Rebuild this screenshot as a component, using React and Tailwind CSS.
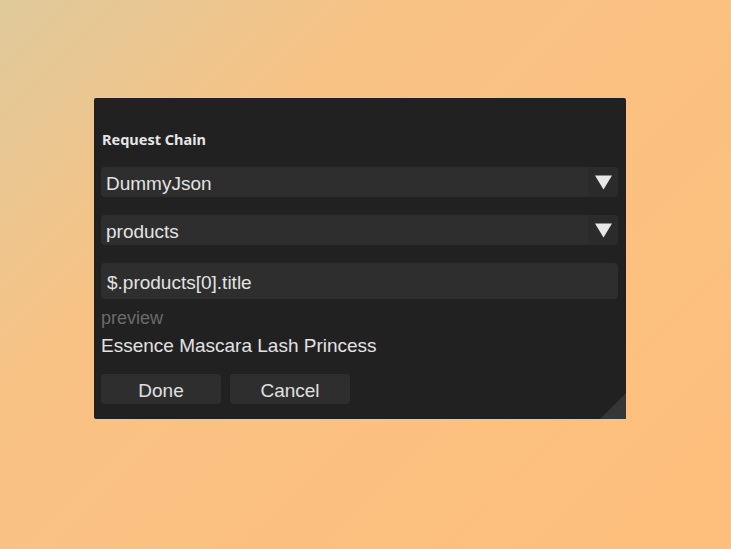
export default function App() {
  return (
    <main className="w-[731px] h-[549px] bg-[linear-gradient(135deg,#dfca9b_0%,#f8c284_32%,#ffbf7c_100%)] pt-[98px] pl-[94px]">
      <div className="relative w-[532px] h-[321px] bg-[#212121] rounded-[2px] px-[7px] pt-[31px] font-['Liberation_Sans',Arial,sans-serif] text-[#e3e3e3]">
        {/* TITLE */}
        <h1 className="h-[20px] pl-[1px] text-[14.5px] leading-[20px] font-bold font-['Noto_Sans',sans-serif] text-[#e6e6e6]">
          Request Chain
        </h1>

        {/* DROPDOWNS */}
        <div className="mt-[18px] flex flex-col gap-[18px]">
          {["DummyJson", "products"].map((label) => (
            <div
              key={label}
              className="flex h-[30px] w-[517px] rounded-[4px] bg-[#2e2e2e] overflow-hidden"
            >
              <div className="flex-1 pl-[5px] text-[19px] leading-[33px]">{label}</div>
              <div className="w-[30px] h-full bg-[#2b2b2b] flex items-center justify-center">
                <svg width="17" height="15" viewBox="0 0 17 15">
                  <polygon points="0,0.5 17,0.5 8.5,14.5" fill="#e8e8e8" />
                </svg>
              </div>
            </div>
          ))}
        </div>

        {/* PATH INPUT */}
        <div className="mt-[18px] h-[36px] w-[517px] rounded-[4px] bg-[#2e2e2e] pl-[6px] text-[19px] leading-[40px]">
          $.products[0].title
        </div>

        {/* PREVIEW */}
        <p className="mt-[9px] h-[20px] text-[18px] leading-[20px] text-[#6b6b6b]">preview</p>
        <p className="mt-[7px] h-[22px] text-[19px] leading-[22px]">Essence Mascara Lash Princess</p>

        {/* ACTIONS */}
        <div className="mt-[17px] flex gap-[9px]">
          <button className="w-[120px] h-[30px] rounded-[4px] bg-[#2e2e2e] text-[19px] leading-[33px] text-[#e0e0e0]">
            Done
          </button>
          <button className="w-[120px] h-[30px] rounded-[4px] bg-[#2e2e2e] text-[19px] leading-[33px] text-[#e0e0e0]">
            Cancel
          </button>
        </div>

        {/* RESIZE GRIP */}
        <svg className="absolute right-0 bottom-0" width="26" height="26" viewBox="0 0 26 26">
          <polygon points="26,0 26,26 0,26" fill="#363636" />
        </svg>
      </div>
    </main>
  );
}
